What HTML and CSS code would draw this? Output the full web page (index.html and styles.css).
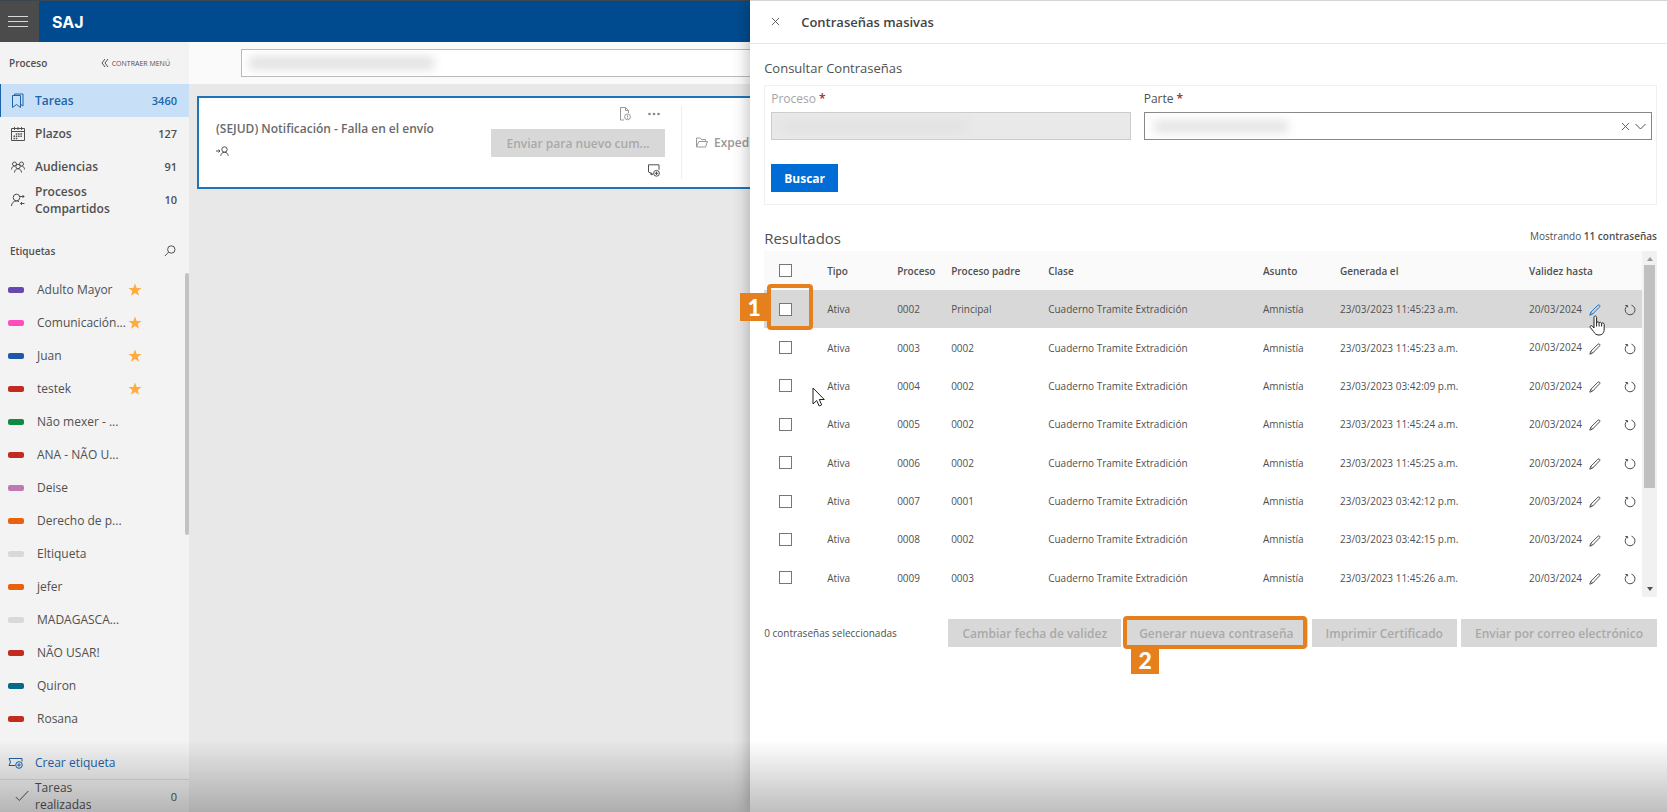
FILE: index.html
```html
<!DOCTYPE html>
<html lang="es">

<head>
  <meta charset="UTF-8">
  <meta name="viewport" content="width=device-width, initial-scale=1.0">
  <title>SAJ - Contraseñas masivas</title>
  <link rel="stylesheet" href="styles.css">
</head>

<body>

  <!-- Shared icons -->
  <svg class="sprite" aria-hidden="true">
    <symbol id="star" viewBox="0 0 14 14">
      <path d="M7 0.5l1.7 4.4 4.8.2-3.8 3 1.3 4.7L7 10.100l-4 2.700 1.300-4.700-3.800-3 4.800-.2z" />
    </symbol>
    <symbol id="pencil" viewBox="0 0 12 12">
      <path d="M.8 11.200l1-2.900 7.200-7.200c1-.8 2.500.5 1.700 1.600L3.500 10.200zM2 8.300l1.500 1.600" />
    </symbol>
    <symbol id="refresh" viewBox="0 0 12 12">
      <path d="M7.500 1.200a4.900 4.900 0 1 1-4.400.8M1.300 1.500h2.300v1.800" />
    </symbol>
    <symbol id="cross" viewBox="0 0 10 10">
      <path d="M1 1l8 8M9 1l-8 8" />
    </symbol>
  </svg>

  <header class="topbar">
    <button class="burger" type="button" aria-label="Menú"><span></span><span></span><span></span></button>
    <span class="logo">SAJ</span>
  </header>

  <div class="layout">
    <aside class="sidebar">
      <div class="sidebar-head">
        <span>Proceso</span>
        <button type="button" class="collapse">
          <svg class="icon" width="8" height="8" viewBox="0 0 8 8"><path d="M4 0L1 4l3 4M7 0L4 4l3 4" /></svg>
          CONTRAER MENÚ
        </button>
      </div>

      <nav class="menu">
        <a href="#" class="active">
          <svg class="icon" width="14" height="16" viewBox="0 0 14 16"><path d="M1.500 2.500h8v12l-4-3-4 3zM3.500 2.500V1h8.500v12l-2-1.500" /></svg>
          <span>Tareas</span><b>3460</b>
        </a>
        <a href="#">
          <svg class="icon" width="14" height="16" viewBox="0 0 14 16"><path d="M.5 2.500h13v12H.5zM.5 5.500h13M3.500 1v3M7 1v3M10.500 1v3" /><path stroke-width="1.500" stroke-dasharray="1.500 .8" d="M4.800 8h7M2.500 10.300h9.200M2.500 12.500h4.500" /></svg>
          <span>Plazos</span><b>127</b>
        </a>
        <a href="#">
          <svg class="icon" width="14" height="12" viewBox="0 0 14 12"><circle cx="3.500" cy="3" r="2" /><circle cx="10.500" cy="3" r="2" /><circle cx="7" cy="5.500" r="2.200" /><path d="M.5 8.500c0-2 1.200-3.300 3-3.300M13.500 8.500c0-2-1.200-3.300-3-3.300M3.500 11.500c0-2.300 1.500-3.700 3.500-3.700s3.500 1.400 3.500 3.700" /></svg>
          <span>Audiencias</span><b>91</b>
        </a>
        <a href="#">
          <svg class="icon" width="14" height="14" viewBox="0 0 14 14"><circle cx="5.500" cy="4.500" r="3.300" /><path d="M.5 13c0-3 2-5 5-5 1 0 1.700.2 2.500.7M9 3.500h4M11.500 2L13 3.500 11.500 5M13.500 10.500h-4M11 9l-1.500 1.500L11 12" /></svg>
          <span>Procesos Compartidos</span><b>10</b>
        </a>
      </nav>

      <div class="tags-head">
        <span>Etiquetas</span>
        <svg class="icon" width="12" height="12" viewBox="0 0 12 12"><circle cx="7.300" cy="4.500" r="3.700" /><path d="M4.600 7.200L.8 11" /></svg>
      </div>

      <div class="tags">
        <ul>
          <li><i class="purple"></i><span>Adulto Mayor</span><svg class="star"><use href="#star" /></svg></li>
          <li><i class="pink"></i><span>Comunicación...</span><svg class="star"><use href="#star" /></svg></li>
          <li><i class="blue"></i><span>Juan</span><svg class="star"><use href="#star" /></svg></li>
          <li><i class="red"></i><span>testek</span><svg class="star"><use href="#star" /></svg></li>
          <li><i class="green"></i><span>Não mexer - ...</span></li>
          <li><i class="red"></i><span>ANA - NÃO U...</span></li>
          <li><i class="mauve"></i><span>Deise</span></li>
          <li><i class="orange"></i><span>Derecho de p...</span></li>
          <li><i class="gray"></i><span>Eltiqueta</span></li>
          <li><i class="orange"></i><span>jefer</span></li>
          <li><i class="gray"></i><span>MADAGASCA...</span></li>
          <li><i class="red"></i><span>NÃO USAR!</span></li>
          <li><i class="teal"></i><span>Quiron</span></li>
          <li><i class="red"></i><span>Rosana</span></li>
        </ul>
        <div class="tags-scroll"></div>
      </div>

      <a href="#" class="create-tag">
        <svg class="icon" width="16" height="12" viewBox="0 0 16 12"><path d="M7 8.500H1l1.500-3.500L1 1.500h13v3" /><circle cx="11" cy="8" r="3.300" /><path d="M11 6.200v3.600M9.200 8h3.600" /></svg>
        Crear etiqueta
      </a>
      <a href="#" class="done">
        <svg class="icon" width="14" height="12" viewBox="0 0 14 12"><path d="M.8 7l3.500 3.500L13.300 1" /></svg>
        <span>Tareas realizadas</span><b>0</b>
      </a>
    </aside>

    <main class="content">
      <div class="search">
        <input type="text" aria-label="Buscar proceso">
        <span class="redacted"></span>
      </div>

      <article class="task">
        <div class="task-info">
          <h2>(SEJUD) Notificación - Falla en el envío</h2>
          <svg class="icon" width="13" height="10" viewBox="0 0 13 10"><path d="M0 5h4M2.500 3.500L4 5 2.500 6.500" /><circle cx="8.500" cy="3.500" r="2.700" /><path d="M4.800 9.800c.2-2 1.500-3.500 3.700-3.500s3.500 1.500 3.700 3.500" /></svg>
        </div>
        <div class="task-actions">
          <div class="task-icons">
            <svg class="icon faint" width="11" height="14" viewBox="0 0 11 14"><path d="M4 13H.5V.5h5l3 3V6M5.500.5v3h3" /><circle cx="7.500" cy="9.800" r="2.900" /><path d="M7.500 8.200v2M7.500 10.800v1" /></svg>
            <svg class="dots" width="12" height="4" viewBox="0 0 12 4"><circle cx="1.500" cy="2" r="1.300" /><circle cx="6" cy="2" r="1.300" /><circle cx="10.500" cy="2" r="1.300" /></svg>
          </div>
          <button type="button" disabled>Enviar para nuevo cum...</button>
          <svg class="icon" width="12" height="13" viewBox="0 0 12 13"><path d="M5 10.500L3.500 9.500.5 8V.8h10.500v5M3 8.500v2.500l1.500-1" /><circle cx="8.500" cy="9.300" r="2.900" /><path d="M8.500 7.600V11M6.800 9.300h3.400" /></svg>
        </div>
        <div class="task-file">
          <svg class="icon" width="12" height="11" viewBox="0 0 12 11"><path d="M.5 10V1h3.700l1.300 1.500h4v2M.5 10l2.300-5.500h8.700L9.500 10z" /></svg>
          Expediente
        </div>
      </article>
    </main>
  </div>

  <section class="panel">
    <div class="panel-head">
      <button type="button" aria-label="Cerrar"><svg class="icon" width="9" height="9"><use href="#cross" /></svg></button>
      <h1>Contraseñas masivas</h1>
    </div>

    <div class="panel-body">
      <h2>Consultar Contraseñas</h2>
      <form class="query">
        <div class="fields">
          <div class="field field-process">
            <label for="proceso">Proceso <em>*</em></label>
            <div class="control">
              <input type="text" id="proceso" disabled>
              <span class="redacted"></span>
            </div>
          </div>
          <div class="field field-party">
            <label for="parte">Parte <em>*</em></label>
            <div class="control">
              <input type="text" id="parte">
              <span class="redacted"></span>
              <span class="control-icons">
                <svg class="icon" width="9" height="9"><use href="#cross" /></svg>
                <svg class="icon" width="11" height="7" viewBox="0 0 11 7"><path d="M.5 1l5 5 5-5" /></svg>
              </span>
            </div>
          </div>
        </div>
        <button type="button" class="primary">Buscar</button>
      </form>

      <div class="results-head">
        <h2>Resultados</h2>
        <p>Mostrando <b>11 contraseñas</b></p>
      </div>

      <div class="results">
        <table>
          <colgroup>
            <col class="c-check">
            <col class="c-type">
            <col class="c-process">
            <col class="c-parent">
            <col>
            <col class="c-subject">
            <col class="c-created">
            <col class="c-valid">
            <col class="c-refresh">
          </colgroup>
          <thead>
            <tr>
              <th><input type="checkbox" aria-label="Seleccionar todo"></th>
              <th>Tipo</th>
              <th>Proceso</th>
              <th>Proceso padre</th>
              <th>Clase</th>
              <th>Asunto</th>
              <th>Generada el</th>
              <th>Validez hasta</th>
              <th></th>
            </tr>
          </thead>
          <tbody id="rows"></tbody>
        </table>
        <div class="scrollbar">
          <span class="arrow up"></span>
          <span class="thumb"></span>
          <span class="arrow down"></span>
        </div>
        <div class="mark mark-check"><span>1</span></div>
        <svg class="cursor cursor-arrow" width="13" height="20" viewBox="0 0 13 20"><path d="M1 1v16l3.700-3.500 2.500 5.500 2.500-1.100-2.400-5.400h5z" /></svg>
        <svg class="cursor cursor-hand" width="17" height="21" viewBox="0 0 17 21"><path d="M5 13V2.500c0-2 2.600-2 2.600 0V8c0-1.500 2.500-1.500 2.500.3 0-1.500 2.500-1.300 2.500.5 0-1.400 2.600-1.200 2.600.7V14c0 4-2 6-5.200 6-3 0-4.200-1.400-5.500-3.500L1.300 12.500c-.8-1.500 1-2.500 2-1.300zM7.600 8v3.500M10.100 8.500v3M12.600 9v2.500" /></svg>
      </div>

      <div class="actions">
        <span>0 contraseñas seleccionadas</span>
        <button type="button" disabled>Cambiar fecha de validez</button>
        <div class="marked">
          <button type="button" disabled>Generar nueva contraseña</button>
          <div class="mark mark-button"><span>2</span></div>
        </div>
        <button type="button" disabled>Imprimir Certificado</button>
        <button type="button" disabled>Enviar por correo electrónico</button>
      </div>
    </div>
  </section>

  <div class="shade"></div>

  <script src="script.js"></script>
</body>

</html>
```
FILE: styles.css
```css
:root {
  --blue: #004b8f;
  --link: #1d64a8;
  --button: #006dd6;
  --mark: #e5801c;
  --disabled: #d8d8d8;
  --text: #505050;
}

* {
  margin: 0;
  padding: 0;
  box-sizing: border-box;
  font-family: 'Open Sans', 'Noto Sans', sans-serif;
}

body {
  height: 100vh;
  overflow: hidden;
  display: flex;
  flex-direction: column;
  background-color: #e8e8e8;
  color: var(--text);
  font-size: 12px;
}

a {
  color: inherit;
  text-decoration: none;
}

button {
  border: none;
  background: none;
  color: inherit;
  font-size: 12px;
  cursor: pointer;
}

h1,
h2 {
  font-weight: 400;
}

.sprite {
  position: absolute;
  width: 0;
  height: 0;
}

.icon {
  flex: none;
  fill: none;
  stroke: currentColor;
  stroke-width: 1;
}

.redacted {
  position: absolute;
  filter: blur(5px);
}

/* Top bar */
.topbar {
  flex: none;
  display: flex;
  align-items: center;
  height: 42px;
  border-top: 1px solid #3c4650;
  background-color: var(--blue);
}

.burger {
  display: flex;
  flex-direction: column;
  justify-content: center;
  gap: 4px;
  align-self: stretch;
  width: 39px;
  padding: 0 11px 0 8px;
  background-color: #4b4b4b;
}

.burger span {
  height: 1px;
  background-color: #d8d8d8;
}

.logo {
  margin-left: 13px;
  font-family: Inter, sans-serif;
  font-size: 16px;
  font-weight: 700;
  color: #fff;
}

.layout {
  flex: 1;
  display: flex;
  min-height: 0;
}

/* Sidebar */
.sidebar {
  flex: none;
  display: flex;
  flex-direction: column;
  width: 189px;
  background-color: #f3f3f3;
}

.sidebar-head,
.tags-head {
  display: flex;
  align-items: center;
  justify-content: space-between;
  height: 42px;
  padding: 0 19px 0 9px;
  font-size: 10px;
  font-weight: 600;
}

.collapse {
  display: flex;
  align-items: center;
  gap: 3px;
  font-size: 7px;
}

.menu a {
  display: flex;
  align-items: center;
  height: 33px;
  padding: 0 12px 0 11px;
  line-height: 17px;
}

.menu span {
  flex: 1;
  margin-left: 10px;
  font-weight: 600;
}

.menu b {
  font-size: 11px;
  font-weight: 600;
}

.menu .active {
  padding-left: 10px;
  border-left: 1px solid var(--link);
  background-color: #c7e0f7;
  color: var(--link);
}

.tags-head {
  height: 57px;
  padding: 13px 13px 0 10px;
}

.tags {
  flex: none;
  display: flex;
  justify-content: space-between;
}

.tags ul {
  list-style: none;
}

.tags li {
  display: flex;
  align-items: center;
  height: 33px;
  padding-left: 8px;
}

.tags i {
  width: 16px;
  height: 6px;
  margin-right: 13px;
  border-radius: 2px;
}

.tags span {
  width: 91px;
  white-space: nowrap;
}

.tags-scroll {
  width: 4px;
  height: 262px;
  border-radius: 2px;
  background-color: #c2c2c2;
}

.star {
  width: 14px;
  height: 14px;
  fill: #ffab3d;
}

.purple { background-color: #6847b0; }
.pink { background-color: #ff4dbe; }
.blue { background-color: #1f57a8; }
.red { background-color: #c22b20; }
.green { background-color: #0f8a45; }
.mauve { background-color: #c078b0; }
.orange { background-color: #e8610c; }
.gray { background-color: #d9d9d9; }
.teal { background-color: #046a86; }

.create-tag {
  flex: 1;
  display: flex;
  align-items: center;
  gap: 11px;
  padding: 11px 8px 0;
  color: var(--link);
}

.done {
  display: flex;
  align-items: center;
  height: 33px;
  padding: 0 12px 0 15px;
  border-top: 1px solid #ddd;
  line-height: 17px;
}

.done span {
  width: 70px;
  margin-left: 6px;
}

.done b {
  margin-left: auto;
  font-size: 11px;
  font-weight: 400;
}

/* Main content */
.content {
  flex: 1;
  min-width: 0;
}

.search {
  position: relative;
  height: 42px;
  padding: 7px 0 7px 52px;
  background-color: #fafafa;
}

.search input {
  width: 100%;
  height: 28px;
  border: 1px solid #b9b9b9;
  background-color: #fff;
}

.search .redacted {
  left: 60px;
  top: 14px;
  width: 185px;
  height: 14px;
  background-color: #e2e3e2;
}

.task {
  display: flex;
  height: 93px;
  margin: 12px 0 0 8px;
  border: 2px solid #1e74b8;
  background-color: #fff;
}

.task-info {
  width: 292px;
  padding: 22px 0 0 17px;
}

.task-info h2 {
  font-size: 12px;
  font-weight: 600;
  line-height: 18px;
  white-space: nowrap;
  color: #6a6a6a;
}

.task-info svg {
  display: block;
  margin-top: 8px;
}

.task-actions {
  display: flex;
  flex-direction: column;
  align-items: flex-end;
  width: 174px;
}

.task-icons {
  display: flex;
  align-items: center;
  gap: 17px;
  height: 31px;
  padding-right: 5px;
}

.faint {
  color: #999;
}

.dots {
  fill: #888;
}

.task-actions button {
  width: 100%;
  height: 28px;
  margin-bottom: 7px;
  background-color: var(--disabled);
  color: #a9a9a9;
  font-weight: 600;
  white-space: nowrap;
}

.task-actions > svg {
  margin-right: 5px;
}

.task-file {
  display: flex;
  align-items: center;
  gap: 6px;
  margin: 8px 0 8px 16px;
  padding-left: 14px;
  border-left: 1px solid #eee;
  color: #999;
  font-weight: 600;
}

/* Side panel */
.panel {
  position: absolute;
  top: 0;
  right: 0;
  bottom: 0;
  width: 55%;
  border-top: 1px solid #d5d5d5;
  background-color: #fff;
  box-shadow: 0 0 16px rgba(0, 0, 0, 0.3);
}

.panel-head {
  display: flex;
  align-items: center;
  height: 43px;
  border-bottom: 1px solid #e6e6e6;
}

.panel-head button {
  width: 51px;
  line-height: 1;
}

.panel-head h1 {
  font-size: 13px;
  font-weight: 600;
  line-height: 20px;
  color: #444;
}

.panel-body {
  padding: 13px 10px 0 14px;
}

.panel h2 {
  font-size: 13px;
  line-height: 22px;
}

.query {
  height: 120px;
  margin-top: 6px;
  padding: 3px 4px 0 6px;
  border: 1px solid #f0f0f0;
}

.fields {
  display: flex;
  gap: 13px;
  margin-bottom: 24px;
}

.field label {
  display: block;
  font-size: 12px;
  line-height: 20px;
}

.field em {
  font-style: normal;
  font-weight: 600;
  color: #a4262c;
}

.field-process {
  flex: 360;
}

.field-process label {
  color: #a5a5a5;
}

.field-party {
  flex: 509;
}

.control {
  position: relative;
  margin-top: 3px;
}

.control input {
  display: block;
  width: 100%;
  height: 28px;
  border: 1px solid #888;
  background-color: #fff;
}

.control input:disabled {
  border-color: #ccc;
  background-color: #e9e9e9;
}

.control .redacted {
  left: 10px;
  top: 8px;
  width: 134px;
  height: 13px;
  background-color: #e5e5e5;
}

.field-process .redacted {
  width: 184px;
  background-color: #e2e2e2;
}

.control-icons {
  position: absolute;
  top: 0;
  right: 6px;
  display: flex;
  align-items: center;
  gap: 5px;
  height: 28px;
}

.primary {
  display: block;
  width: 67px;
  height: 28px;
  background-color: var(--button);
  color: #fff;
  font-size: 12px;
  font-weight: 700;
}

.results-head {
  display: flex;
  justify-content: space-between;
  margin-top: 21px;
}

.results-head h2 {
  font-size: 15px;
  line-height: 25px;
}

.results-head p {
  font-size: 10px;
  line-height: 20px;
}

.results-head b {
  font-weight: 600;
}

.results {
  position: relative;
  display: flex;
}

table {
  flex: 1;
  width: 100%;
  height: 346px;
  table-layout: fixed;
  border-collapse: collapse;
  font-size: 10px;
}

th,
td {
  text-align: left;
  white-space: nowrap;
}

th {
  height: 39px;
  background-color: #fafafa;
  font-weight: 600;
}

th:first-child,
td:first-child {
  padding-left: 15px;
}

tbody tr:first-child {
  background-color: var(--disabled);
}

.c-check { width: 63px; }
.c-type { width: 70px; }
.c-process { width: 54px; }
.c-parent { width: 97px; }
.c-subject { width: 77px; }
.c-created { width: 189px; }
.c-valid { width: 95px; }
.c-refresh { width: 18px; }

input[type="checkbox"] {
  appearance: none;
  display: block;
  width: 13px;
  height: 13px;
  border: 1px solid #777;
  background-color: #fff;
}

td button {
  display: inline-block;
  height: 12px;
  vertical-align: middle;
}

td svg {
  display: block;
  width: 12px;
  height: 12px;
}

td .edit {
  margin-left: 4px;
}

tbody tr:first-child .edit {
  color: #1a73c8;
}

.scrollbar {
  flex: none;
  display: flex;
  flex-direction: column;
  align-items: center;
  width: 15px;
  padding: 6px 0;
  background-color: #f1f1f1;
}

.arrow {
  border: 3px solid transparent;
}

.up {
  border-top: none;
  border-bottom: 4px solid #999;
}

.down {
  margin-top: auto;
  border-top: 4px solid #505050;
  border-bottom: none;
}

.thumb {
  width: 11px;
  height: 223px;
  margin-top: 4px;
  background-color: #c0c0c0;
}

.actions {
  display: flex;
  align-items: center;
  gap: 4px;
  margin-top: 22px;
}

.actions > span {
  margin-right: auto;
  font-size: 10px;
}

.actions button {
  height: 28px;
  padding: 0 14px;
  background-color: var(--disabled);
  color: #a9a9a9;
  font-weight: 600;
  white-space: nowrap;
}

/* Numbered step marks */
.marked {
  position: relative;
}

.mark {
  position: absolute;
  border: 4px solid var(--mark);
  border-radius: 4px;
}

.mark span {
  position: absolute;
  width: 28px;
  height: 28px;
  background-color: var(--mark);
  color: #fff;
  font-family: 'Lato', sans-serif;
  font-size: 23px;
  font-weight: 900;
  line-height: 28px;
  text-align: center;
}

.mark-check {
  left: 3px;
  top: 33px;
  width: 46px;
  height: 46px;
}

.mark-check span {
  right: 41px;
  top: 5px;
}

.mark-button {
  inset: -3px 1px -2px -2px;
}

.mark-button span {
  left: 4px;
  top: 26px;
}

.cursor {
  position: absolute;
  fill: #fff;
  stroke: #222;
}

.cursor-arrow {
  left: 48px;
  top: 136px;
}

.cursor-hand {
  right: 51px;
  top: 64px;
}

/* Bottom fade over the whole page */
.shade {
  position: fixed;
  left: 0;
  right: 0;
  bottom: 0;
  height: 72px;
  background: linear-gradient(rgba(0, 0, 0, 0), rgba(0, 0, 0, 0.25));
  pointer-events: none;
}
```
FILE: script.js
```js
const items = [
  ['0002', 'Principal', '23/03/2023 11:45:23 a.m.'],
  ['0003', '0002', '23/03/2023 11:45:23 a.m.'],
  ['0004', '0002', '23/03/2023 03:42:09 p.m.'],
  ['0005', '0002', '23/03/2023 11:45:24 a.m.'],
  ['0006', '0002', '23/03/2023 11:45:25 a.m.'],
  ['0007', '0001', '23/03/2023 03:42:12 p.m.'],
  ['0008', '0002', '23/03/2023 03:42:15 p.m.'],
  ['0009', '0003', '23/03/2023 11:45:26 a.m.']
];

document.getElementById('rows').innerHTML = items.map(([process, parent, created]) => `
  <tr>
    <td><input type="checkbox" aria-label="Seleccionar ${process}"></td>
    <td>Ativa</td>
    <td>${process}</td>
    <td>${parent}</td>
    <td>Cuaderno Tramite Extradición</td>
    <td>Amnistía</td>
    <td>${created}</td>
    <td>20/03/2024 <button type="button" class="edit" aria-label="Editar"><svg class="icon"><use href="#pencil" /></svg></button></td>
    <td><button type="button" aria-label="Renovar"><svg class="icon"><use href="#refresh" /></svg></button></td>
  </tr>
`).join('');
```
